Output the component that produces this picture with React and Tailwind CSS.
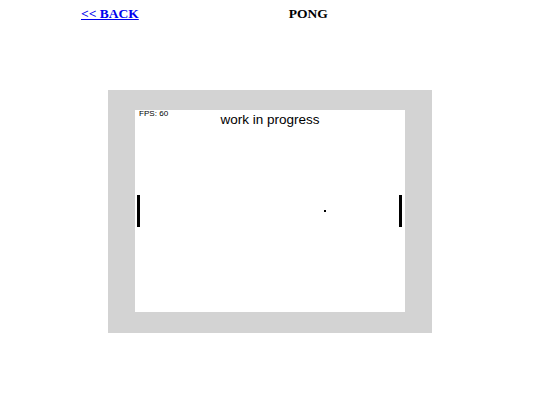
export default function App() {
  return (
    <div className="w-[540px] h-[405px] bg-white overflow-hidden">
      {/* top navigation */}
      <div className="flex items-start gap-[150px] pl-[81px] pt-[7px] h-[21px] font-['Liberation_Serif',serif] font-bold text-[13.5px] leading-none">
        <a href="#" className="text-[#0000ee] underline">
          &lt;&lt; BACK
        </a>
        <span className="text-black">PONG</span>
      </div>

      {/* game frame */}
      <div className="mt-[69px] flex justify-center">
        <div className="w-[324px] h-[243px] bg-[#d3d3d3] pt-[20px] flex justify-center">
          <div className="relative w-[270px] h-[202px] bg-white font-['Liberation_Sans',Arial,sans-serif] text-black">
            <span className="absolute left-[4px] top-[0px] text-[8.1px] leading-none whitespace-nowrap">
              FPS: 60
            </span>
            <span className="absolute left-0 right-0 top-[3px] text-center text-[13.5px] leading-none whitespace-nowrap">
              work in progress
            </span>
            {/* paddles */}
            <div className="absolute left-[2px] top-[85px] w-[3px] h-[32px] bg-black" />
            <div className="absolute left-[264px] top-[85px] w-[3px] h-[32px] bg-black" />
            {/* ball */}
            <div className="absolute left-[189px] top-[100px] w-[2px] h-[2px] bg-black" />
          </div>
        </div>
      </div>
    </div>
  );
}
